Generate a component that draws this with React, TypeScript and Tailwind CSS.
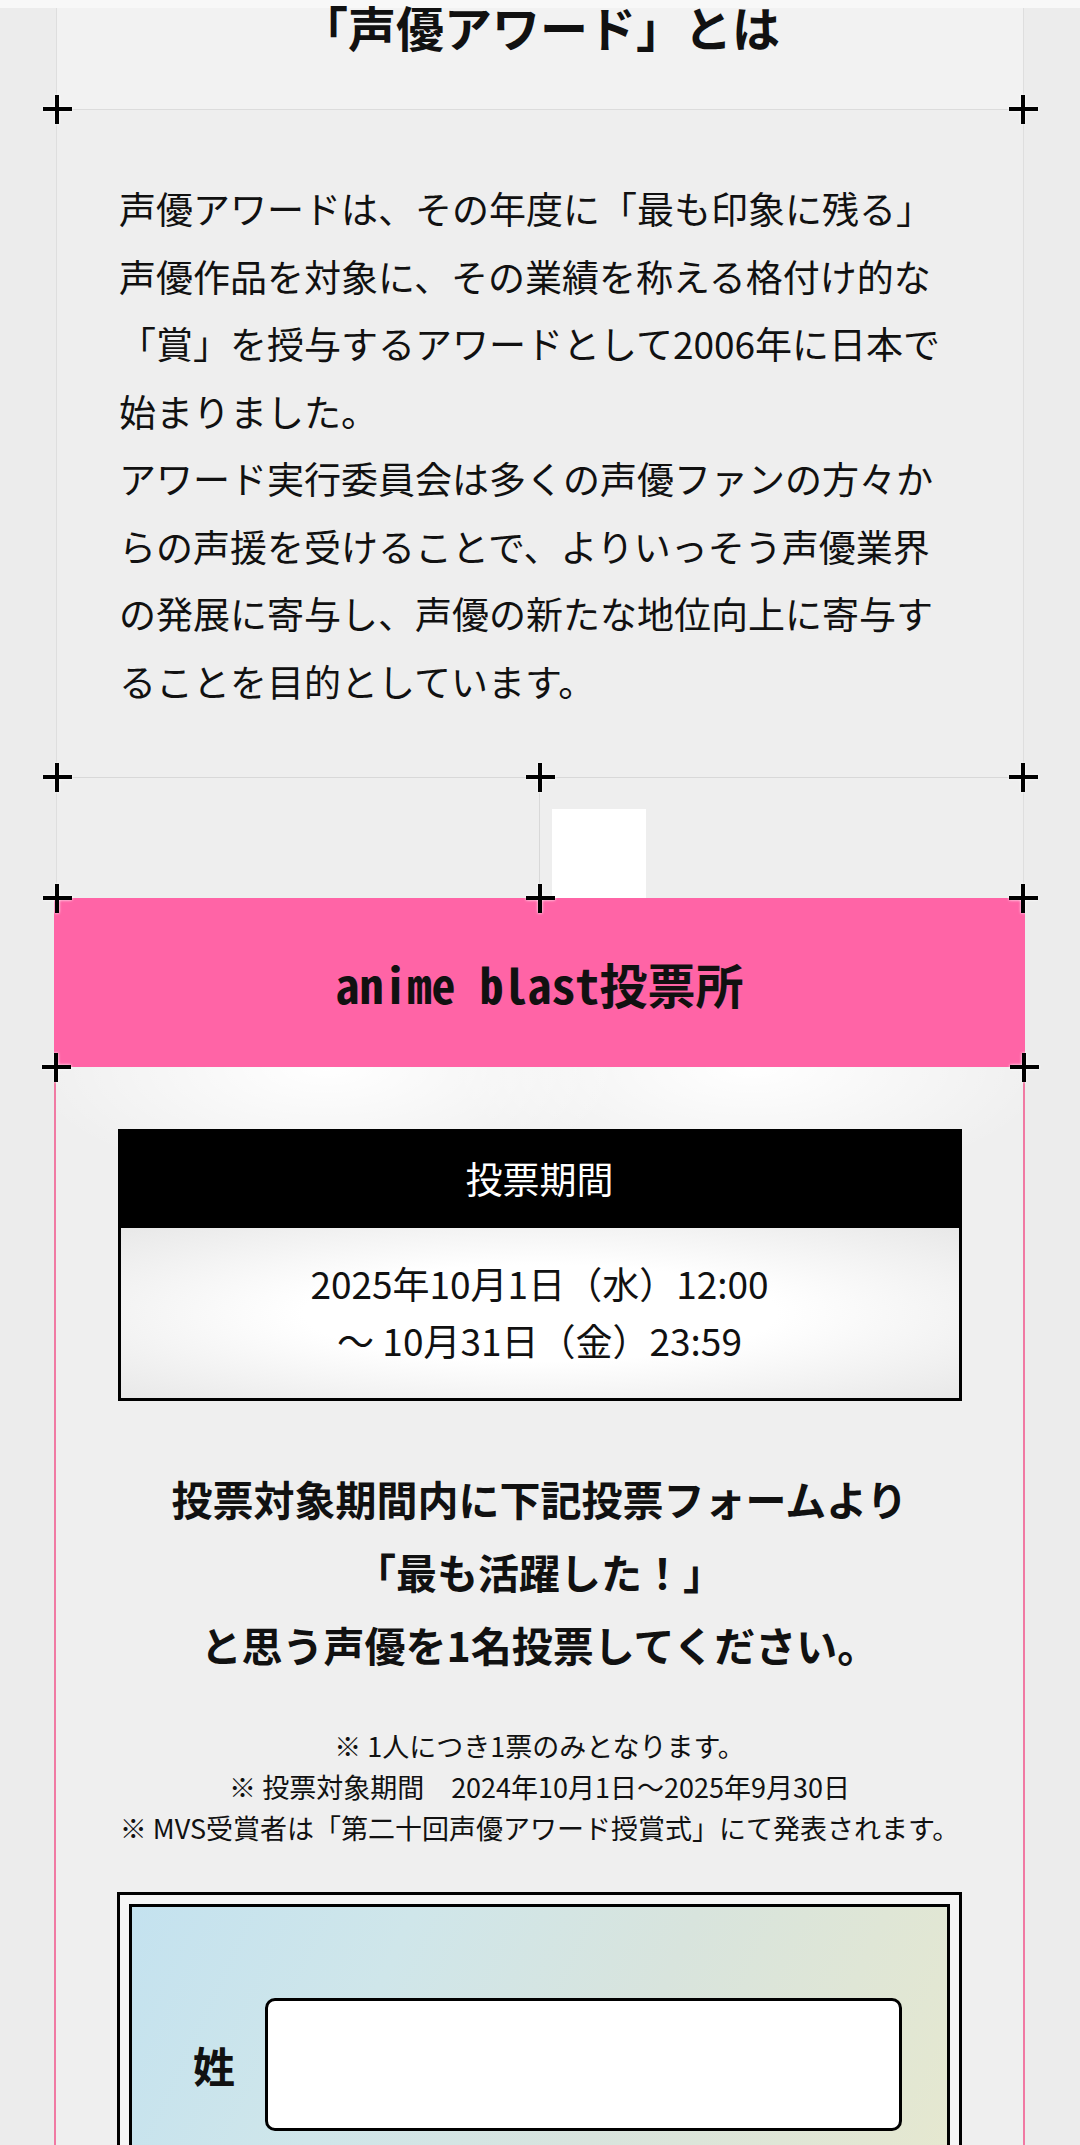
import React from 'react';

// guide marker drawn on panel corners
const Cross = ({ pos }: { pos: string }) => (
  <div className={`absolute z-20 w-[29px] h-[29px] -ml-[14px] -mt-[14px] drop-shadow-[0_0_1.5px_#ffffff] ${pos}`}>
    <div className="absolute left-0 top-[12px] w-[29px] h-[4px] bg-black" />
    <div className="absolute top-0 left-[12px] h-[29px] w-[4px] bg-black" />
  </div>
);

const jp = "font-['Noto_Sans_CJK_JP','Noto_Sans_CJK_SC',sans-serif]";
const mono = "font-['Noto_Sans_Mono_CJK_JP','Noto_Sans_CJK_JP',monospace]";

const notes = [
  '※ 1人につき1票のみとなります。',
  '※ 投票対象期間　2024年10月1日～2025年9月30日',
  '※ MVS受賞者は「第二十回声優アワード授賞式」にて発表されます。',
];

const App = () => {
  return (
    <div className={`h-[2145px] overflow-hidden bg-[#ececec] text-[#111] ${jp}`}>
      <div className="h-[8px] bg-[#f8f8f8]" />

      {/* about section */}
      <div className="mx-[56px] border-x border-[#dedede]">
        <div className="relative flex flex-col h-[102px] bg-[#f2f2f2] border-b border-[#dcdcdc]">
          <h2 className="-mt-[6px] text-center text-[48px] leading-[48px] font-bold">「声優アワード」とは</h2>
          <Cross pos="left-0 top-full" />
          <Cross pos="left-full top-full" />
        </div>

        <div className="relative bg-[#eeeeee] px-[62px] pt-[65px] pb-[62px] text-[37px] leading-[67.5px]">
          <p>
            声優アワードは、その年度に「最も印象に残る」声優作品を対象に、その業績を称える格付け的な「賞」を授与するアワードとして2006年に日本で始まりました。
          </p>
          <p>
            アワード実行委員会は多くの声優ファンの方々からの声援を受けることで、よりいっそう声優業界の発展に寄与し、声優の新たな地位向上に寄与することを目的としています。
          </p>
          <Cross pos="left-0 top-full" />
          <Cross pos="left-1/2 top-full" />
          <Cross pos="left-full top-full" />
        </div>

        <div className="relative grid grid-cols-2 h-[121px] border-t border-[#d8d8d8] bg-[#eeeeee]">
          <div className="border-r border-[#d8d8d8]" />
          <div className="pl-[12px] pt-[31px]">
            <div className="w-[94px] h-[89px] bg-white" />
          </div>
          <Cross pos="left-0 top-full" />
          <Cross pos="left-1/2 top-full" />
          <Cross pos="left-full top-full" />
        </div>
      </div>

      {/* vote section */}
      <div className="ml-[54px] mr-[55px]">
        <div className="relative h-[169px] bg-[#ff64a6] flex items-center justify-center">
          <h2 className={`text-[48px] font-bold ${mono}`}>anime blast投票所</h2>
          <Cross pos="left-[2px] top-full" />
          <Cross pos="left-[calc(100%-1px)] top-full" />
        </div>

        <div className="border-x-2 border-[#f07aa3] bg-[#efefef] bg-[radial-gradient(ellipse_300px_120px_at_28%_0%,#ffffff_0%,rgba(255,255,255,0)_100%),radial-gradient(ellipse_300px_120px_at_72%_0%,#ffffff_0%,rgba(255,255,255,0)_100%)] pt-[62px] pb-[40px]">
          <div className="mx-auto w-[844px]">
            <div className="h-[99px] bg-black flex items-center justify-center text-white text-[37px]">投票期間</div>
            <div className="border-[3px] border-t-0 border-black bg-[radial-gradient(ellipse_at_center,#ffffff_40%,#e8e8e8_100%)] pt-[27px] pb-[29px] text-center text-[37px] leading-[57px]">
              2025年10月1日（水）12:00
              <br />
              ～ 10月31日（金）23:59
            </div>
          </div>

          <p className="mt-[61px] text-center text-[41px] font-bold leading-[73px]">
            投票対象期間内に下記投票フォームより
            <br />
            「最も活躍した！」
            <br />
            と思う声優を1名投票してください。
          </p>

          <div className="mt-[44px] text-center text-[27px] leading-[41px]">
            {notes.map((n, i) => (
              <p key={i}>{n}</p>
            ))}
          </div>

          <div className="mx-auto mt-[44px] w-[845px] border-[3px] border-black bg-[#f6f6f6] p-[9px]">
            <div className="border-[3px] border-black bg-[linear-gradient(115deg,#c4e2ef_0%,#cfe6ea_30%,#d8e4dd_60%,#e6e8cf_100%)] pt-[91px] pb-[60px] pl-[61px] pr-[45px] flex items-center gap-[30px]">
              <span className="text-[42px] font-bold leading-none">姓</span>
              <div className="flex-1 h-[133px] border-[3px] border-black rounded-[10px] bg-white" />
            </div>
          </div>
        </div>
      </div>
    </div>
  );
};

export default App;
